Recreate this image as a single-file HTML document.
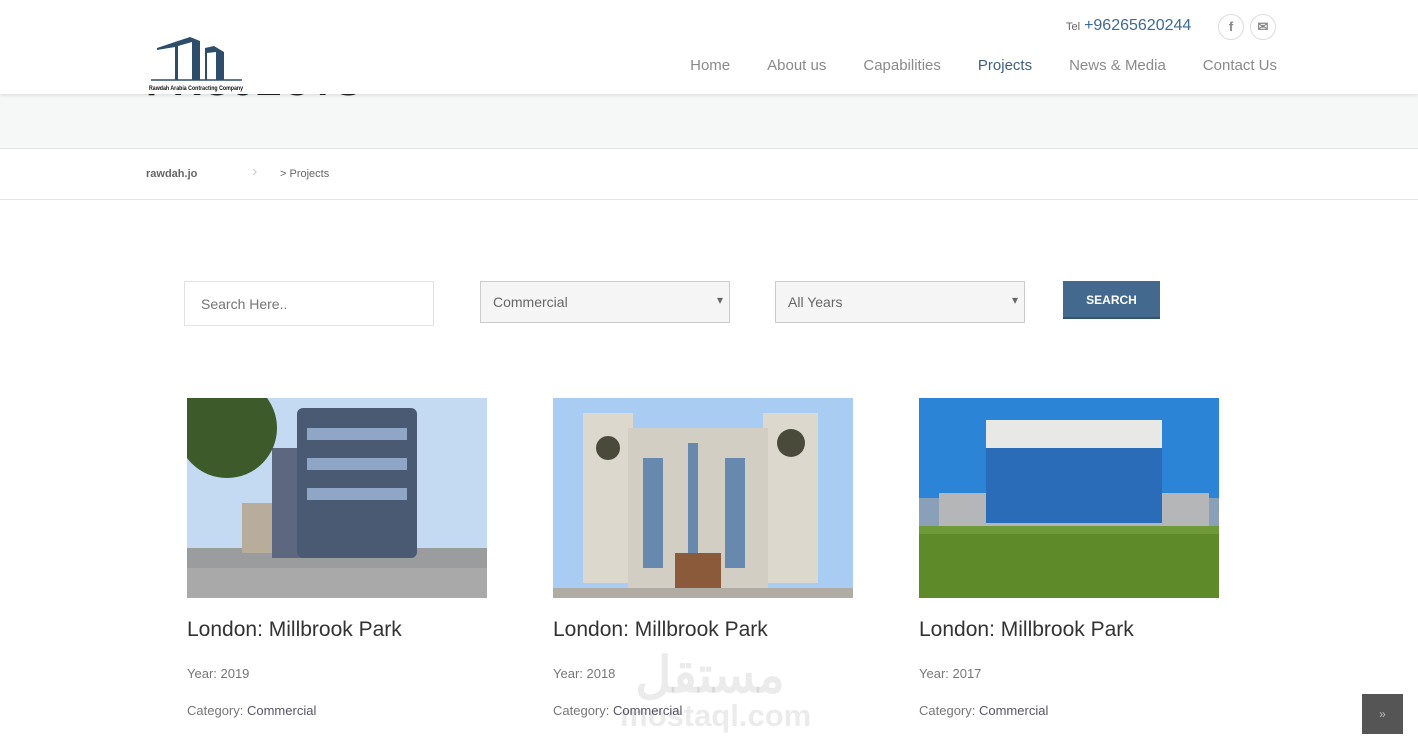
<!DOCTYPE html>
<html><head><meta charset="utf-8"><style>
*{margin:0;padding:0;box-sizing:border-box}
body{width:1418px;height:755px;overflow:hidden;background:#fff;font-family:"Liberation Sans",sans-serif;position:relative}
.band{position:absolute;top:94px;left:0;width:1418px;height:55px;background:#f6f7f7;border-bottom:1px solid #e3e3e3}
.ptitle{position:absolute;left:146px;top:60px;font-size:40px;font-weight:bold;color:#222;letter-spacing:0}
header{position:absolute;top:0;left:0;width:1418px;height:94px;background:#fff;box-shadow:0 1px 4px rgba(0,0,0,.12);overflow:hidden}
.tel{position:absolute;left:1066px;top:17px;font-size:16px;color:#3e6a96}
.tel small{font-size:11px;color:#666;margin-right:4px}
.ic{position:absolute;top:14px;width:26px;height:26px;border:1px solid #ddd;border-radius:50%;color:#888;font-size:13px;text-align:center;line-height:24px;font-weight:bold}
nav{position:absolute;top:57px;right:141px;font-size:15px;color:#8a8a8a}
nav span{margin-left:37px}
nav .a{color:#3e5f80}
.bc{position:absolute;top:149px;left:0;width:1418px;height:51px;border-bottom:1px solid #e3e3e3;font-size:11px;color:#666}
input,.sel{position:absolute;font-size:14px;color:#666;font-family:"Liberation Sans",sans-serif}
.sel{background:#f4f5f4;border:1px solid #ccc;height:42px;top:281px;width:250px;padding:12px;}
.sel:after{content:"▾";position:absolute;right:6px;top:11px;font-size:12px;color:#666}
.btn{position:absolute;left:1063px;top:281px;width:97px;height:38px;background:#436a8e;color:#fff;font-size:12px;font-weight:bold;text-align:center;line-height:38px;border-bottom:2px solid #34536f}
.card{position:absolute;top:398px;width:300px}
.card h3{font-weight:normal;font-size:21px;color:#333;margin-top:15px;height:48px}
.card p{font-size:13px;color:#777;margin-top:0;height:37px}
.card p b{font-weight:normal;color:#556}
.wm{position:absolute;left:620px;top:650px;width:180px;color:rgba(0,0,0,.08);font-weight:bold;text-align:center;font-family:"Liberation Sans","Noto Sans CJK SC",sans-serif}
.top{position:absolute;left:1362px;top:694px;width:41px;height:40px;background:#555;color:#bbb;text-align:center;line-height:40px;font-size:12px}
</style></head><body>
<div class="band"></div>
<div class="ptitle">PROJECTS</div>
<header>
<svg style="position:absolute;left:148px;top:34px" width="98" height="60" viewBox="0 0 98 60">
<path d="M9 14 L42 3 L52 7 L52 46 L44 46 L44 8 L30 12 L30 46 L27 46 L27 13 L9 16 Z" fill="#2e4d6b"/>
<path d="M57 14 L66 12 L76 18 L76 46 L68 46 L68 18 L59 19 L59 46 L57 46Z" fill="#2e4d6b"/>
<path d="M3 46 L94 46" stroke="#2e4d6b" stroke-width="1.5"/>
<text x="1" y="56" font-size="6" font-family="Liberation Sans" font-weight="bold" fill="#111" textLength="94" lengthAdjust="spacingAndGlyphs">Rawdah Arabia Contracting Company</text>
</svg>
<div class="tel"><small>Tel</small>+96265620244</div>
<div class="ic" style="left:1218px">f</div>
<div class="ic" style="left:1250px">✉</div>
<nav><span>Home</span><span>About us</span><span>Capabilities</span><span class="a">Projects</span><span>News &amp; Media</span><span>Contact Us</span></nav>
</header>
<div class="bc"><span style="position:absolute;left:146px;top:19px;font-weight:bold;color:#666">rawdah.jo</span><span style="position:absolute;left:252px;top:14px;font-size:16px;color:#ccc">›</span><span style="position:absolute;left:280px;top:19px">&gt; Projects</span></div>
<input style="left:184px;top:281px;width:250px;height:45px;border:1px solid #e3e3e3;padding:0 16px" placeholder="Search Here..">
<div class="sel" style="left:480px">Commercial</div>
<div class="sel" style="left:775px">All Years</div>
<div class="btn">SEARCH</div>

<div class="card" style="left:187px">
<svg width="300" height="200"><rect width="300" height="200" fill="#c4daf3"/><rect y="150" width="300" height="50" fill="#9a9c9e"/><rect x="85" y="50" width="60" height="110" fill="#5d6880"/><rect x="110" y="10" width="120" height="150" rx="6" fill="#4a5a72"/><rect x="120" y="30" width="100" height="12" fill="#8fa6c6"/><rect x="120" y="60" width="100" height="12" fill="#8fa6c6"/><rect x="120" y="90" width="100" height="12" fill="#8fa6c6"/><rect x="55" y="105" width="30" height="50" fill="#b8ad9a"/><circle cx="40" cy="30" r="50" fill="#3c5a2a"/><rect y="170" width="300" height="30" fill="#a9a9aa"/></svg>
<h3>London: Millbrook Park</h3><p>Year: 2019</p><p>Category: <b>Commercial</b></p></div>
<div class="card" style="left:553px">
<svg width="300" height="200"><rect width="300" height="200" fill="#a9cdf2"/><rect x="30" y="15" width="50" height="170" fill="#dcd8cd"/><rect x="210" y="15" width="55" height="170" fill="#dcd8cd"/><rect x="75" y="30" width="140" height="160" fill="#d2cec3"/><rect x="90" y="60" width="20" height="110" fill="#6789ad"/><rect x="135" y="45" width="10" height="130" fill="#6789ad"/><rect x="172" y="60" width="20" height="110" fill="#6789ad"/><rect x="122" y="155" width="46" height="40" fill="#8a5a3a"/><circle cx="55" cy="50" r="12" fill="#4a4a3a"/><circle cx="238" cy="45" r="14" fill="#4a4a3a"/><rect y="190" width="300" height="10" fill="#b0aca4"/></svg>
<h3>London: Millbrook Park</h3><p>Year: 2018</p><p>Category: <b>Commercial</b></p></div>
<div class="card" style="left:919px">
<svg width="300" height="200"><rect width="300" height="200" fill="#2b84d6"/><rect y="100" width="300" height="40" fill="#8aa0b8"/><rect x="20" y="95" width="270" height="35" fill="#b4b6b8"/><rect x="67" y="22" width="176" height="30" fill="#e8e8e6"/><rect x="67" y="50" width="176" height="75" fill="#2a6cb8"/><rect y="128" width="300" height="72" fill="#5f8a2a"/><rect y="128" width="300" height="8" fill="#6f9a3a"/></svg>
<h3>London: Millbrook Park</h3><p>Year: 2017</p><p>Category: <b>Commercial</b></p></div>

<div class="wm"><div style="font-size:50px;line-height:50px">مستقل</div><div style="font-size:31px;line-height:32px">mostaql.com</div></div>
<div class="top">»</div>
</body></html>
